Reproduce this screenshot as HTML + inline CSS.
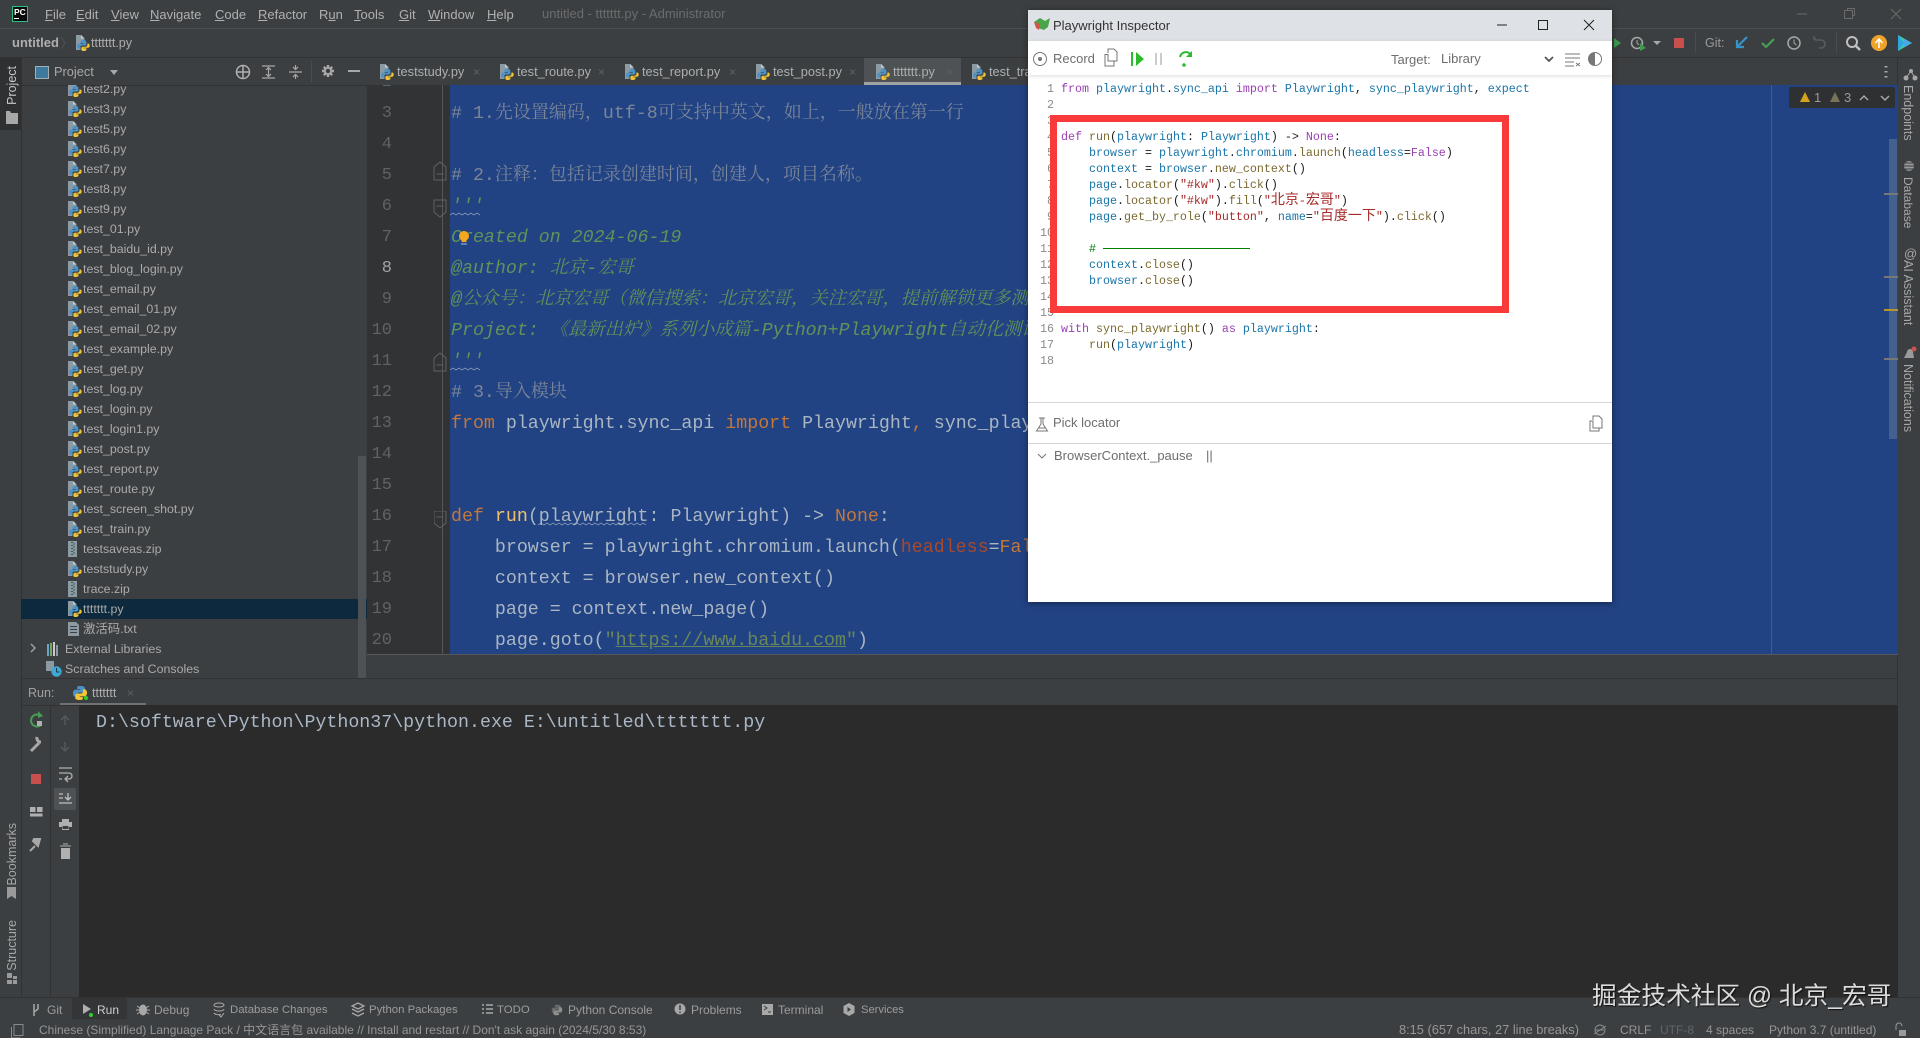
<!DOCTYPE html>
<html lang="zh">
<head>
<meta charset="utf-8">
<title>PyCharm with Playwright Inspector</title>
<style>
html,body{margin:0;padding:0;width:1920px;height:1038px;overflow:hidden;background:#3c3f41}
body{position:relative;font-family:"Liberation Sans","Noto Sans CJK SC",sans-serif;color:#b4b4b4;filter:blur(.3px)}
.a{position:absolute}
.t{position:absolute;white-space:pre;transform:translateY(-50%);line-height:20px}
.m{font-size:13px;top:15px;color:#b0b0b0}
.tab{font-size:12.8px;top:72px;color:#aeaeae}
.x{font-size:12px;top:72px;color:#5e6060}
.b{font-size:12px;top:1010px;color:#9c9c9c}
.s{font-size:12px;top:1030px;color:#969696}
#tree{position:absolute;left:21px;top:85px;width:346px;height:593px;overflow:hidden;font-size:12.4px;color:#aaaaaa}
#tree .r{position:relative;height:20px;line-height:20px;padding-left:62px;white-space:pre}
#tree svg{position:absolute;left:45px;top:2px}
.n{position:absolute;right:0;width:60px;text-align:right;font:17px/20px "Liberation Mono",monospace;color:#606366;transform:translateY(-50%);margin-top:2px}
#ed{position:absolute;left:450px;top:85px;width:1448px;height:569px;background:#214283;overflow:hidden}
.l{position:absolute;left:1px;white-space:pre;font:18.3px/24px "Liberation Mono","Noto Serif CJK SC",monospace;color:#aab6c2;transform:translateY(-50%);margin-top:2px}
.c{color:#7a8598}.k{color:#c4773a}.d{font-style:italic;color:#5f9358}.f{color:#f2c06c}
.z{font-size:18px}
.v{writing-mode:vertical-rl;position:absolute;font-size:12.5px;white-space:pre;color:#a8a8a8;line-height:16px}
.vl{transform:rotate(180deg)}
#ins{position:absolute;left:1028px;top:10px;width:584px;height:592px;background:#fff;box-shadow:0 1px 6px rgba(0,0,0,.45);overflow:hidden}
#ins .t{color:#6e6e6e;font-size:13px}
.p{position:absolute;left:33px;white-space:pre;font:11.67px/16px "Liberation Mono","Noto Sans CJK SC",monospace;color:#1a1a1a;transform:translateY(-50%)}
.q{position:absolute;left:0;width:26px;text-align:right;font:11.67px/16px "Liberation Mono",monospace;color:#8a8a8a;transform:translateY(-50%)}
.pk{color:#9a3fb5}.pv{color:#1a75a8}.pf{color:#7a6a30}.ps{color:#a82a2a}
.cj{font-size:14px}
</style>
</head>
<body>
<svg width="0" height="0" style="position:absolute">
  <defs>
    <symbol id="py" viewBox="0 0 16 16">
      <path d="M2 0h5.500l3 3V7H6.500v8H2z" fill="#8b9aa3"/>
      <path d="M7 0.500V3.500h3z" fill="#c7d0d6"/>
      <path d="M9.500 5c-2 0-3 .6-3 1.800V8h3.200v.6H5.200C3.800 8.600 3 9.700 3 11.200c0 1.500.7 2.500 1.900 2.500h1.300v-1.500c0-1 .9-1.700 1.900-1.700h2.800c.8 0 1.400-.6 1.400-1.300V6.800C12.300 5.700 11 5 9.500 5z" fill="#4a94c9"/>
      <path d="M13.400 8.500v1.400c0 1-.9 1.800-1.800 1.800H8.800c-.8 0-1.400.6-1.400 1.400v1.500c0 1 1 1.400 2.200 1.400 1.500 0 2.900-.5 2.900-1.500V13.200H9.800v-.5h4.200c1 0 1.700-.9 1.700-2.100 0-1.300-.7-2.100-1.600-2.100z" fill="#f2c537"/>
    </symbol>
    <symbol id="pyb" viewBox="0 0 16 16">
      <path d="M8 1C5 1 5.200 2.300 5.200 2.300V4h3v.6H3.800S1 4.300 1 8.100c0 3.800 2.500 3.700 2.500 3.700H5v-1.800s-.1-2.500 2.400-2.500h3s2.300 0 2.300-2.200V2.900S13 1 8 1z" fill="#4a94c9"/>
      <path d="M8 15c3 0 2.800-1.300 2.800-1.300V12h-3v-.6h4.400s2.800.3 2.800-3.500-2.500-3.700-2.500-3.700H11v1.800s.1 2.500-2.400 2.500h-3s-2.300 0-2.300 2.200v2.400S3 15 8 15z" fill="#f2c537"/>
    </symbol>
    <symbol id="zip" viewBox="0 0 16 16">
      <path d="M2 0h9v16H2z" fill="#8b9aa3"/>
      <path d="M5 1h2v1H5zM7 2.500h2v1H7zM5 4h2v1H5zM7 5.500h2v1H7zM5 7h2v1H5zM7 8.500h2v1H7zM5 10h2v1H5zM7 11.500h2v1H7zM5 13h2v1H5z" fill="#3a5a4a"/>
    </symbol>
  </defs>
</svg>

<!-- bars -->
<div class="a" style="left:0;top:28px;width:1920px;height:1px;background:#4b4d4f"></div>
<div class="a" style="left:0;top:57px;width:1920px;height:1px;background:#323232"></div>
<div class="a" style="left:0;top:85px;width:1898px;height:1px;background:#323232"></div>
<div class="a" style="left:0;top:58px;width:21px;height:72px;background:#2e3031"></div>
<div class="a" style="left:21px;top:58px;width:1px;height:940px;background:#323232"></div>
<div class="a" style="left:1897px;top:58px;width:1px;height:940px;background:#323232"></div>

<!-- menu -->
<div class="t m" style="left:45px"><u>F</u>ile</div>
<div class="t m" style="left:76px"><u>E</u>dit</div>
<div class="t m" style="left:111px"><u>V</u>iew</div>
<div class="t m" style="left:150px"><u>N</u>avigate</div>
<div class="t m" style="left:215px"><u>C</u>ode</div>
<div class="t m" style="left:258px"><u>R</u>efactor</div>
<div class="t m" style="left:319px">R<u>u</u>n</div>
<div class="t m" style="left:354px"><u>T</u>ools</div>
<div class="t m" style="left:399px"><u>G</u>it</div>
<div class="t m" style="left:428px"><u>W</u>indow</div>
<div class="t m" style="left:487px"><u>H</u>elp</div>
<div class="t m" style="left:542px;top:14px;color:#6a6c6e">untitled - ttttttt.py - Administrator</div>

<!-- nav -->
<div class="t" style="left:12px;top:43px;font-size:13px;font-weight:bold;color:#aeaeae">untitled</div>
<div class="t" style="left:91px;top:43px;font-size:12.5px;color:#aeaeae">ttttttt.py</div>

<!-- project header -->
<div class="t" style="left:54px;top:72px;font-size:12.8px;color:#a8a8a8">Project</div>

<!-- tabs -->
<div class="a" style="left:864px;top:58px;width:97px;height:24px;background:#4e5254"></div>
<div class="a" style="left:864px;top:82px;width:97px;height:3px;background:#a0a2a4"></div>
<div class="t tab" style="left:397px">teststudy.py</div><div class="t x" style="left:473px">×</div>
<div class="t tab" style="left:517px">test_route.py</div><div class="t x" style="left:598px">×</div>
<div class="t tab" style="left:642px">test_report.py</div><div class="t x" style="left:729px">×</div>
<div class="t tab" style="left:773px">test_post.py</div><div class="t x" style="left:849px">×</div>
<div class="t tab" style="left:893px">ttttttt.py</div><div class="t x" style="left:946px">×</div>
<div class="t tab" style="left:989px">test_train.py</div>

<!-- project tree -->
<div id="tree">
<div style="height:0;margin-top:-6px"></div>
<div class="r"><svg width="16" height="16"><use href="#py"/></svg>test2.py</div>
<div class="r"><svg width="16" height="16"><use href="#py"/></svg>test3.py</div>
<div class="r"><svg width="16" height="16"><use href="#py"/></svg>test5.py</div>
<div class="r"><svg width="16" height="16"><use href="#py"/></svg>test6.py</div>
<div class="r"><svg width="16" height="16"><use href="#py"/></svg>test7.py</div>
<div class="r"><svg width="16" height="16"><use href="#py"/></svg>test8.py</div>
<div class="r"><svg width="16" height="16"><use href="#py"/></svg>test9.py</div>
<div class="r"><svg width="16" height="16"><use href="#py"/></svg>test_01.py</div>
<div class="r"><svg width="16" height="16"><use href="#py"/></svg>test_baidu_id.py</div>
<div class="r"><svg width="16" height="16"><use href="#py"/></svg>test_blog_login.py</div>
<div class="r"><svg width="16" height="16"><use href="#py"/></svg>test_email.py</div>
<div class="r"><svg width="16" height="16"><use href="#py"/></svg>test_email_01.py</div>
<div class="r"><svg width="16" height="16"><use href="#py"/></svg>test_email_02.py</div>
<div class="r"><svg width="16" height="16"><use href="#py"/></svg>test_example.py</div>
<div class="r"><svg width="16" height="16"><use href="#py"/></svg>test_get.py</div>
<div class="r"><svg width="16" height="16"><use href="#py"/></svg>test_log.py</div>
<div class="r"><svg width="16" height="16"><use href="#py"/></svg>test_login.py</div>
<div class="r"><svg width="16" height="16"><use href="#py"/></svg>test_login1.py</div>
<div class="r"><svg width="16" height="16"><use href="#py"/></svg>test_post.py</div>
<div class="r"><svg width="16" height="16"><use href="#py"/></svg>test_report.py</div>
<div class="r"><svg width="16" height="16"><use href="#py"/></svg>test_route.py</div>
<div class="r"><svg width="16" height="16"><use href="#py"/></svg>test_screen_shot.py</div>
<div class="r"><svg width="16" height="16"><use href="#py"/></svg>test_train.py</div>
<div class="r"><svg width="16" height="16"><use href="#zip"/></svg>testsaveas.zip</div>
<div class="r"><svg width="16" height="16"><use href="#py"/></svg>teststudy.py</div>
<div class="r"><svg width="16" height="16"><use href="#zip"/></svg>trace.zip</div>
<div class="r" style="background:#0d293e"><svg width="16" height="16"><use href="#py"/></svg>ttttttt.py</div>
<div class="r"><svg width="16" height="16" viewBox="0 0 16 16"><path d="M2 1h8l3 3v11H2z" fill="#8b9aa3"/><path d="M4 5h7v1H4zM4 8h7v1H4zM4 11h7v1H4z" fill="#3c3f41"/></svg>激活码.txt</div>
<div class="r" style="padding-left:44px"><svg width="16" height="16" viewBox="0 0 16 16" style="left:25px"><path d="M1 3h2v12H1z" fill="#6aa5c9"/><path d="M4 2h2v13H4z" fill="#7aa860"/><path d="M7 1h2v14H7z" fill="#c9c9c9"/><path d="M10 4h2v11h-2z" fill="#8b9aa3"/></svg>External Libraries</div>
<div class="r" style="padding-left:44px"><svg width="16" height="16" viewBox="0 0 16 16" style="left:25px"><path d="M0 0h8v10H0z" fill="#8b9aa3"/><circle cx="10.500" cy="10.500" r="5.200" fill="#3fa9d4"/><path d="M10.500 7v4h3" stroke="#1d3c4c" fill="none"/></svg>Scratches and Consoles</div>
</div>
<div class="a" style="left:358px;top:456px;width:8px;height:222px;background:#505355;opacity:.95"></div>

<!-- gutter -->
<div class="a" style="left:367px;top:85px;width:83px;height:569px;background:#313335;overflow:hidden">
  <div class="n" style="left:-35px;top:-4px">2</div>
  <div class="n" style="left:-35px;top:27px">3</div>
  <div class="n" style="left:-35px;top:58px">4</div>
  <div class="n" style="left:-35px;top:89px">5</div>
  <div class="n" style="left:-35px;top:120px">6</div>
  <div class="n" style="left:-35px;top:151px">7</div>
  <div class="n" style="left:-35px;top:182px;color:#a4a3a3">8</div>
  <div class="n" style="left:-35px;top:213px">9</div>
  <div class="n" style="left:-35px;top:244px">10</div>
  <div class="n" style="left:-35px;top:275px">11</div>
  <div class="n" style="left:-35px;top:306px">12</div>
  <div class="n" style="left:-35px;top:337px">13</div>
  <div class="n" style="left:-35px;top:368px">14</div>
  <div class="n" style="left:-35px;top:399px">15</div>
  <div class="n" style="left:-35px;top:430px">16</div>
  <div class="n" style="left:-35px;top:461px">17</div>
  <div class="n" style="left:-35px;top:492px">18</div>
  <div class="n" style="left:-35px;top:523px">19</div>
  <div class="n" style="left:-35px;top:554px">20</div>
  <div class="a" style="left:75px;top:0;width:1px;height:569px;background:#555759"></div>
</div>

<!-- editor -->
<div id="ed">
  <div class="l c" style="top:27px"># 1.<span class="z">先设置编码，</span>utf-8<span class="z">可支持中英文，如上，一般放在第一行</span></div>
  <div class="l c" style="top:89px"># 2.<span class="z">注释：包括记录创建时间，创建人，项目名称。</span></div>
  <div class="l d" style="top:120px">'''</div>
  <div class="l d" style="top:151px">Created on 2024-06-19</div>
  <div class="l d" style="top:182px">@author: 北京-宏哥</div>
  <div class="l d" style="top:213px">@公众号：北京宏哥（微信搜索：北京宏哥，关注宏哥，提前解锁更多测试干货！）</div>
  <div class="l d" style="top:244px">Project: 《最新出炉》系列小成篇-Python+Playwright自动化测试</div>
  <div class="l d" style="top:275px">'''</div>
  <div class="l c" style="top:306px"># 3.<span class="z">导入模块</span></div>
  <div class="l" style="top:337px"><span class="k">from</span> playwright.sync_api <span class="k">import</span> Playwright<span class="k">,</span> sync_playwright<span class="k">,</span> expect</div>
  <div class="l" style="top:430px"><span class="k">def</span> <span class="f">run</span>(playwright: Playwright) -&gt; <span class="k">None</span>:</div>
  <div class="l" style="top:461px">    browser = playwright.chromium.launch(<span style="color:#aa4926">headless</span>=<span class="k">False</span>)</div>
  <div class="l" style="top:492px">    context = browser.new_context()</div>
  <div class="l" style="top:523px">    page = context.new_page()</div>
  <div class="l" style="top:554px">    page.goto(<span style="color:#6a8759">"<u>https://www.baidu.com</u>"</span>)</div>
  <div class="a" style="left:1321px;top:0;width:1px;height:569px;background:#3f5c8c"></div>
  <div class="a" style="left:1439px;top:54px;width:8px;height:300px;background:#43608f"></div>
  <div class="a" style="left:1434px;top:108px;width:14px;height:2px;background:#777"></div>
  <div class="a" style="left:1434px;top:191px;width:14px;height:2px;background:#777"></div>
  <div class="a" style="left:1434px;top:224px;width:14px;height:2px;background:#b8952c"></div>
  <div class="a" style="left:1434px;top:273px;width:14px;height:2px;background:#777"></div>
  <div class="a" style="left:1339px;top:2px;width:106px;height:21px;background:#2f3031;border-radius:2px"></div>
  <div class="t" style="left:1364px;top:13px;font-size:13px;color:#9a9a9a">1</div>
  <div class="t" style="left:1394px;top:13px;font-size:13px;color:#9a9a9a">3</div>
  <svg class="a" style="left:0;top:0" width="1448" height="569">
    <path d="M0 130l3-2 3 2 3-2 3 2 3-2 3 2 3-2 3 2 3-2 3 2" fill="none" stroke="#a9b7c6" stroke-width=".6"/>
    <path d="M0 285l3-2 3 2 3-2 3 2 3-2 3 2 3-2 3 2 3-2 3 2" fill="none" stroke="#a9b7c6" stroke-width=".6"/>
    <path d="M88 440l3-2 3 2 3-2 3 2 3-2 3 2 3-2 3 2 3-2 3 2 3-2 3 2 3-2 3 2 3-2 3 2 3-2 3 2 3-2 3 2 3-2 3 2 3-2 3 2 3-2 3 2 3-2 3 2 3-2 3 2 3-2 3 2 3-2 3 2 3-2 3 2" fill="none" stroke="#a9b7c6" stroke-width=".6"/>
    <circle cx="14" cy="151" r="5" fill="#f2a91f"/><path d="M11.500 154h5v3h-5z" fill="#f2a91f"/><path d="M11 159h6" stroke="#a9c0e0"/>
    <path d="M1350 17l5-10 5 10z" fill="#d5a21c"/><path d="M1380 17l5-10 5 10z" fill="#77745a"/>
    <path d="M1410 15l4-4 4 4M1431 11l4 4 4-4" fill="none" stroke="#a8a8a8" stroke-width="1.500"/>
  </svg>
</div>
<svg class="a" style="left:430px;top:161px" width="24" height="300" fill="none" stroke="#606366">
  <path d="M4 13V6l6-5 6 5v13H4zM6.500 13h7"/>
  <path d="M4 39h12v12l-6 5-6-5zM6.500 45h7"/>
  <path d="M4 204v-7l6-5 6 5v13H4zM6.500 204h7"/>
</svg>
<svg class="a" style="left:434px;top:511px" width="20" height="36" fill="none" stroke="#606366"><path d="M0 0h12v12l-6 5-6-5zM2.500 6h7"/></svg>

<!-- lower band -->
<div class="a" style="left:367px;top:654px;width:1531px;height:1px;background:#555759"></div>
<div class="a" style="left:21px;top:678px;width:1877px;height:1px;background:#323232"></div>

<!-- run panel -->
<div class="t" style="left:28px;top:693px;font-size:12.5px;color:#a0a0a0">Run:</div>
<div class="t" style="left:92px;top:693px;font-size:12.5px;color:#aeaeae">ttttttt</div>
<div class="t x" style="left:127px;top:693px">×</div>
<div class="a" style="left:60px;top:703px;width:86px;height:3px;background:#6f7173"></div>
<div class="a" style="left:21px;top:705px;width:1877px;height:1px;background:#323232"></div>
<div class="a" style="left:50px;top:706px;width:1px;height:291px;background:#323232"></div>
<div class="a" style="left:79px;top:705px;width:1819px;height:292px;background:#2b2b2b"></div>
<div class="a" style="left:54px;top:788px;width:22px;height:22px;background:#4e5254;border-radius:2px"></div>
<div class="t" style="left:96px;top:723px;font:18.3px/24px 'Liberation Mono',monospace;color:#a9b7c6">D:\software\Python\Python37\python.exe E:\untitled\ttttttt.py</div>

<!-- left stripe labels -->
<div class="v vl" style="left:4px;top:66px;color:#c8c8c8">Project</div>
<div class="v vl" style="left:4px;top:823px">Bookmarks</div>
<div class="v vl" style="left:4px;top:920px">Structure</div>

<!-- right stripe labels -->
<div class="v" style="left:1900px;top:85px">Endpoints</div>
<div class="v" style="left:1900px;top:177px;font-size:12px">Database</div>
<div class="v" style="left:1900px;top:260px">AI Assistant</div>
<div class="v" style="left:1900px;top:364px">Notifications</div>

<!-- toolbar right -->
<div class="t" style="left:1705px;top:43px;font-size:12.5px;color:#9a9a9a">Git:</div>

<!-- bottom strip -->
<div class="a" style="left:0;top:997px;width:1920px;height:1px;background:#323232"></div>
<div class="a" style="left:72px;top:998px;width:55px;height:21px;background:#333536"></div>
<div class="t b" style="left:47px">Git</div>
<div class="t b" style="left:97px;color:#cfcfcf">Run</div>
<div class="t b" style="left:154px">Debug</div>
<div class="t b" style="left:230px;font-size:11.4px">Database Changes</div>
<div class="t b" style="left:369px;font-size:11.4px">Python Packages</div>
<div class="t b" style="left:497px;font-size:11.4px">TODO</div>
<div class="t b" style="left:568px">Python Console</div>
<div class="t b" style="left:691px">Problems</div>
<div class="t b" style="left:778px">Terminal</div>
<div class="t b" style="left:861px;font-size:11.2px">Services</div>

<!-- status -->
<div class="a" style="left:0;top:1019px;width:1920px;height:1px;background:#3a3c3e"></div>
<div class="t s" style="left:39px">Chinese (Simplified) Language Pack / 中文语言包 available // Install and restart // Don't ask again (2024/5/30 8:53)</div>
<div class="t s" style="left:1399px;font-size:12.8px">8:15 (657 chars, 27 line breaks)</div>
<div class="t s" style="left:1620px">CRLF</div>
<div class="t s" style="left:1660px;color:#626466">UTF-8</div>
<div class="t s" style="left:1706px">4 spaces</div>
<div class="t s" style="left:1769px">Python 3.7 (untitled)</div>

<!-- watermark -->
<div class="t" style="left:1592px;top:997px;font-size:24.7px;line-height:30px;color:#dcdcdc;text-shadow:1px 1px 1px #111">掘金技术社区 @ 北京_宏哥</div>

<!-- base icons -->
<svg class="a" style="left:0;top:0;pointer-events:none" width="1920" height="1038">
  <!-- logo -->
  <rect x="12.500" y="6.500" width="15" height="15" fill="#0b0b0b" stroke="#25c28a"/>
  <text x="14" y="15" font-family="Liberation Sans" font-weight="bold" font-size="8.500" fill="#fff">PC</text>
  <path d="M14 18.500h5" stroke="#fff"/>
  <!-- nav -->
  <path d="M61 37l4 6-4 6" fill="none" stroke="#505254"/>
  <use href="#py" x="74" y="35" width="16" height="16"/>
  <!-- project header -->
  <rect x="35.500" y="66.500" width="13" height="12" fill="#3d7a9e" stroke="#a5aeb3"/>
  <path d="M110 70h8l-4 5z" fill="#a8a8a8"/>
  <circle cx="243" cy="72" r="6.500" fill="none" stroke="#b0b0b0" stroke-width="1.500"/>
  <path d="M243 65v14M236 72h14" stroke="#b0b0b0" stroke-width="1.500"/>
  <path d="M262 66h13M262 78h13M268.500 68v8M266 70l2.500-2.500 2.500 2.500M266 74l2.500 2.500 2.500-2.500" fill="none" stroke="#a8a8a8" stroke-width="1.200"/>
  <path d="M289 72h13M295.500 65v4M295.500 75v4M293 67l2.500 2.500L298 67M293 77l2.500-2.500L298 77" fill="none" stroke="#a8a8a8" stroke-width="1.200"/>
  <path d="M311.500 61v21" stroke="#4b4d4f"/>
  <path d="M328 65v3M328 74v3M322 71h3M331 71h3M323.800 66.800l2 2M330.200 73.200l2 2M332.200 66.800l-2 2M325.800 73.200l-2 2" stroke="#a8a8a8" stroke-width="2.400"/>
  <circle cx="328" cy="71" r="3.200" fill="none" stroke="#a8a8a8" stroke-width="2"/>
  <path d="M348 71h12" stroke="#a8a8a8" stroke-width="2"/>
  <!-- left stripe -->
  <path d="M6 111h4l1 2h7v11H6z" fill="#a8a8a8"/>
  <path d="M7 887h9v12l-4.500-3-4.500 3z" fill="#9a9a9a"/>
  <path d="M7 973h5v5H7zM13 976h4v3h-4zM7 980h5v4H7zM13 980h4v4h-4z" fill="#9a9a9a"/>
  <!-- tabs -->
  <use href="#py" x="378" y="64" width="16" height="16"/><use href="#py" x="498" y="64" width="16" height="16"/><use href="#py" x="623" y="64" width="16" height="16"/><use href="#py" x="754" y="64" width="16" height="16"/><use href="#py" x="874" y="64" width="16" height="16"/><use href="#py" x="970" y="64" width="16" height="16"/>
  <!-- three dots -->
  <path d="M1886 66v1.500M1886 71v1.500M1886 76v1.500" stroke="#a8a8a8" stroke-width="3"/>
  <!-- top right window -->
  <path d="M1797 14h10" stroke="#6a6a6a"/>
  <path d="M1844.500 18.500v-8h8v8zM1847.500 10.500v-2h7v7h-2" fill="none" stroke="#6a6a6a"/>
  <path d="M1891 9l10 10M1901 9l-10 10" stroke="#6a6a6a"/>
  <!-- toolbar -->
  <path d="M1614 38l7 5-7 5z" fill="#3e9a4e"/>
  <circle cx="1637" cy="43" r="5.500" fill="none" stroke="#a8a8a8" stroke-width="1.500"/><path d="M1637 40v3l2 2" fill="none" stroke="#a8a8a8"/><path d="M1640 43l6 5-6 3z" fill="#3e9a4e"/>
  <path d="M1653 41h8l-4 4z" fill="#a8a8a8"/>
  <rect x="1674" y="38" width="10" height="10" fill="#c94f4f"/>
  <path d="M1695.500 32v21M1836.500 32v21" stroke="#4b4d4f"/>
  <path d="M1747 37l-9 9M1737 40v7h7" fill="none" stroke="#3592c4" stroke-width="2.200"/>
  <path d="M1762 43l4 4 8-8" fill="none" stroke="#499c54" stroke-width="2.200"/>
  <circle cx="1794" cy="43" r="6" fill="none" stroke="#a8a8a8" stroke-width="1.500"/><path d="M1794 39.500V43l2.500 2" fill="none" stroke="#a8a8a8"/>
  <path d="M1816 39h-2v-3M1815 40h6a4 4 0 0 1 0 8h-2" fill="none" stroke="#5a5c5e" stroke-width="1.500"/>
  <circle cx="1852" cy="42" r="5" fill="none" stroke="#c0c0c0" stroke-width="2"/><path d="M1856 46l4 4" stroke="#c0c0c0" stroke-width="2.500"/>
  <circle cx="1879" cy="43" r="8" fill="#f0a32a"/><path d="M1879 48v-9M1875.500 43l3.500-4 3.500 4" fill="none" stroke="#fff" stroke-width="1.500"/>
  <path d="M1898 35l14 8-14 8z" fill="#3fc8a8"/><path d="M1898 35l6 8-6 8z" fill="#2fa6de"/><path d="M1904 39l8 4-8 4z" fill="#4aa7e8"/>
  <!-- right stripe icons -->
  <circle cx="1911" cy="71" r="2" fill="#a8a8a8"/><circle cx="1906" cy="78" r="2.500" fill="#a8a8a8"/><circle cx="1915" cy="78" r="2.500" fill="#a8a8a8"/><path d="M1906 78l5-7 4 7" fill="none" stroke="#a8a8a8"/>
  <ellipse cx="1909" cy="166" rx="5" ry="5" fill="#9a9a9a"/><path d="M1904 163h10M1904 166h10M1904 169h10" stroke="#3c3f41"/>
  <text x="1904" y="258" font-size="13" font-family="Liberation Sans" fill="#a8a8a8">@</text>
  <path d="M1904 358l3-6a3 3 0 0 1 6 0l1 6z" fill="#9a9a9a"/><circle cx="1914" cy="349" r="2.500" fill="#d05050"/>
  <!-- run icons -->
  <use href="#pyb" x="72" y="685" width="16" height="16"/><circle cx="86" cy="698" r="2" fill="#2ed12e"/>
  <path d="M41 716a6 6 0 1 0 0 9" fill="none" stroke="#499c54" stroke-width="2"/><path d="M38 711l5 5-5 2z" fill="#499c54"/><rect x="37" y="721" width="5" height="5" fill="#b0b0b0"/>
  <path d="M31 751l8-8M37 737a4 4 0 0 0 4 5" stroke="#a8a8a8" stroke-width="3" fill="none"/>
  <rect x="31" y="774" width="10" height="10" fill="#c94f4f"/>
  <path d="M30 807h5.500v5H30zM37 807h5.500v5H37zM30 813.500h12.500v3H30z" fill="#b0b0b0"/>
  <path d="M30 851l5-5M33 841l5 5 2-7-6 0z" stroke="#a8a8a8" stroke-width="2" fill="#a8a8a8"/>
  <path d="M65 725v-9M61 720l4-4 4 4M65 742v9M61 747l4 4 4-4" fill="none" stroke="#565859" stroke-width="1.500"/>
  <path d="M59 768h13M59 773h10a3 3 0 0 1 0 6h-3M68 776l-3 3 3 3M59 779h3" fill="none" stroke="#b0b0b0" stroke-width="1.300"/>
  <path d="M59 794h4M59 798h4M59 803h13M68 793v7M65 797l3 3 3-3" fill="none" stroke="#c0c0c0" stroke-width="1.300"/>
  <path d="M62 819h7v3h3v5h-3v3h-7v-3h-3v-5h3z" fill="#b0b0b0"/><path d="M62.500 826h6v3h-6z" fill="#3c3f41"/>
  <path d="M61.500 848.500h8v10h-8zM60 846h11M63 844h5" stroke="#b0b0b0" fill="#b0b0b0"/>
  <!-- bottom icons -->
  <path d="M34 1004v12M38 1004v5l-4 3" fill="none" stroke="#a8a8a8" stroke-width="1.500"/>
  <path d="M83 1004l8 5-8 5z" fill="#b0b0b0"/><circle cx="91" cy="1015" r="2" fill="#2ed12e"/>
  <ellipse cx="143" cy="1010" rx="4" ry="5.500" fill="#a8a8a8"/><path d="M137 1006l3 2M149 1006l-3 2M136 1010h3M150 1010h-3M137 1014l3-2M149 1014l-3-2" stroke="#a8a8a8"/>
  <ellipse cx="219" cy="1005" rx="5" ry="2" fill="none" stroke="#a8a8a8"/><path d="M214 1009a5 2 0 0 0 10 0M214 1013a5 2 0 0 0 7 1.500" fill="none" stroke="#a8a8a8"/><path d="M219 1015l2 2 3-4" fill="none" stroke="#a8a8a8"/>
  <path d="M358 1003l6 3-6 3-6-3zM352 1009l6 3 6-3M352 1013l6 3 6-3" fill="none" stroke="#a8a8a8" stroke-width="1.300"/>
  <path d="M482 1005h2M482 1009h2M482 1013h2M486 1005h7M486 1009h7M486 1013h7" stroke="#a8a8a8" stroke-width="1.500"/>
  <use href="#pyb" x="551" y="1004" width="12" height="12" style="opacity:.6;filter:grayscale(1)"/>
  <circle cx="680" cy="1009" r="5.500" fill="#a8a8a8"/><path d="M680 1005v5M680 1011.500v1.500" stroke="#3c3f41" stroke-width="1.500"/>
  <rect x="762" y="1004" width="11" height="11" fill="#a8a8a8"/><path d="M764 1006l3 2-3 2M768 1012h3" fill="none" stroke="#3c3f41"/>
  <path d="M849 1003l5.500 3v7l-5.500 3-5.500-3v-7z" fill="#a8a8a8"/><path d="M847.500 1007l3.500 2.500-3.500 2.500z" fill="#3c3f41"/>
  <!-- status icons -->
  <path d="M14 1024.500h9v11h-9zM11.500 1027v11h9" fill="none" stroke="#8a8a8a"/>
  <circle cx="1600" cy="1030" r="5" fill="none" stroke="#8a8a8a"/><path d="M1594 1034l12-8M1595 1030h9" stroke="#8a8a8a" fill="none"/>
  <path d="M1896 1030v-4a3 3 0 0 1 6 0" fill="none" stroke="#9a9a9a"/><rect x="1899" y="1030" width="7" height="6" fill="#9a9a9a"/>
  <!-- tree chevron -->
  <path d="M31 644l4 4-4 4" fill="none" stroke="#a8a8a8" stroke-width="1.300"/>
</svg>

<!-- Playwright Inspector -->
<div id="ins">
  <div class="a" style="left:0;top:0;width:584px;height:31px;background:#dee1e6"></div>
  <div class="a" style="left:0;top:31px;width:584px;height:34px;background:#fff;box-shadow:0 1px 4px rgba(0,0,0,.14);z-index:2"></div>
  <div class="t" style="left:25px;top:16px;color:#333;z-index:3">Playwright Inspector</div>
  <div class="t" style="left:25px;top:49px;z-index:3">Record</div>
  <div class="t" style="left:363px;top:50px;z-index:3">Target:</div>
  <div class="t" style="left:413px;top:49px;z-index:3">Library</div>

  <div class="q" style="top:79px">1</div><div class="q" style="top:95px">2</div><div class="q" style="top:111px">3</div><div class="q" style="top:127px">4</div><div class="q" style="top:143px">5</div><div class="q" style="top:159px">6</div><div class="q" style="top:175px">7</div><div class="q" style="top:191px">8</div><div class="q" style="top:207px">9</div><div class="q" style="top:223px">10</div><div class="q" style="top:239px">11</div><div class="q" style="top:255px">12</div><div class="q" style="top:271px">13</div><div class="q" style="top:287px">14</div><div class="q" style="top:303px">15</div><div class="q" style="top:319px">16</div><div class="q" style="top:335px">17</div><div class="q" style="top:351px">18</div>

  <div class="a" style="left:22px;top:105px;width:445px;height:184px;border:7px solid #f93a3a"></div>

  <div class="p" style="top:79px"><span class="pk">from</span> <span class="pv">playwright</span>.<span class="pv">sync_api</span> <span class="pk">import</span> <span class="pv">Playwright</span>, <span class="pv">sync_playwright</span>, <span class="pv">expect</span></div>
  <div class="p" style="top:127px"><span class="pk">def</span> <span class="pf">run</span>(<span class="pv">playwright</span>: <span class="pv">Playwright</span>) -&gt; <span class="pk">None</span>:</div>
  <div class="p" style="top:143px">    <span class="pv">browser</span> = <span class="pv">playwright</span>.<span class="pv">chromium</span>.<span class="pf">launch</span>(<span class="pv">headless</span>=<span class="pk">False</span>)</div>
  <div class="p" style="top:159px">    <span class="pv">context</span> = <span class="pv">browser</span>.<span class="pf">new_context</span>()</div>
  <div class="p" style="top:175px">    <span class="pv">page</span>.<span class="pf">locator</span>(<span class="ps">"#kw"</span>).<span class="pf">click</span>()</div>
  <div class="p" style="top:191px">    <span class="pv">page</span>.<span class="pf">locator</span>(<span class="ps">"#kw"</span>).<span class="pf">fill</span>(<span class="ps">"<span class="cj">北京</span>-<span class="cj">宏哥</span>"</span>)</div>
  <div class="p" style="top:207px">    <span class="pv">page</span>.<span class="pf">get_by_role</span>(<span class="ps">"button"</span>, <span class="pv">name</span>=<span class="ps">"<span class="cj">百度一下</span>"</span>).<span class="pf">click</span>()</div>
  <div class="p" style="top:239px;color:#008000">    #</div>
  <div class="a" style="left:75px;top:238px;width:147px;height:1px;background:#008000"></div>
  <div class="p" style="top:255px">    <span class="pv">context</span>.<span class="pf">close</span>()</div>
  <div class="p" style="top:271px">    <span class="pv">browser</span>.<span class="pf">close</span>()</div>
  <div class="p" style="top:319px"><span class="pk">with</span> <span class="pf">sync_playwright</span>() <span class="pk">as</span> <span class="pv">playwright</span>:</div>
  <div class="p" style="top:335px">    <span class="pf">run</span>(<span class="pv">playwright</span>)</div>

  <div class="a" style="left:0;top:392px;width:584px;height:1px;background:#d6d6d6"></div>
  <div class="a" style="left:0;top:433px;width:584px;height:1px;background:#d6d6d6"></div>
  <div class="t" style="left:25px;top:413px">Pick locator</div>
  <div class="t" style="left:26px;top:446px">BrowserContext._pause</div>
  <div class="t" style="left:178px;top:446px">||</div>

  <svg class="a" style="left:0;top:0;z-index:4" width="584" height="470" fill="none">
    <path d="M6 12l6-4 5 3 5-3-2 9-4 3-6-2z" fill="#4aa44a"/><path d="M6 12l6 2-1 6-3-2z" fill="#d65348"/>
    <path d="M469 15h10M510.500 10.500h9v9h-9zM556 10l10 10M566 10l-10 10" stroke="#222" stroke-width="1"/>
    <circle cx="12" cy="49" r="6.500" stroke="#777"/><circle cx="12" cy="49" r="2" fill="#777"/>
    <path d="M80 43v-4h6l3 3v9h-3M80 44.500h-3V56h9v-5H80z" stroke="#777"/>
    <path d="M104 42v14" stroke="#2dbb2d" stroke-width="2"/><path d="M108 42l8 7-8 7z" fill="#2dbb2d"/>
    <path d="M128 43v12M133 43v12" stroke="#bbb" stroke-width="1.500"/>
    <path d="M152 47a6 6 0 0 1 11-2" stroke="#2dbb2d" stroke-width="2"/><path d="M164 41v6h-6z" fill="#2dbb2d"/><circle cx="156" cy="55" r="1.800" fill="#2dbb2d"/>
    <path d="M517 47l4 4 4-4" stroke="#555" stroke-width="1.800"/>
    <path d="M537 44h15M537 48h15M537 52h9M537 56h9M548 53l4 3M552 53l-4 3" stroke="#777"/>
    <circle cx="567" cy="49" r="6.500" stroke="#777"/><path d="M567 42.500a6.500 6.500 0 0 0 0 13z" fill="#777"/>
    <path d="M13 408v6l-4.500 7h11l-4.500-7v-6M11 408h6M10 418h8" stroke="#777"/>
    <path d="M565 410v-4h6l3 3v9h-3M565 411h-3v10h9v-3h-6z" stroke="#777"/>
    <path d="M10 444l4 4 4-4" stroke="#777"/>
  </svg>
</div>
</body>
</html>
